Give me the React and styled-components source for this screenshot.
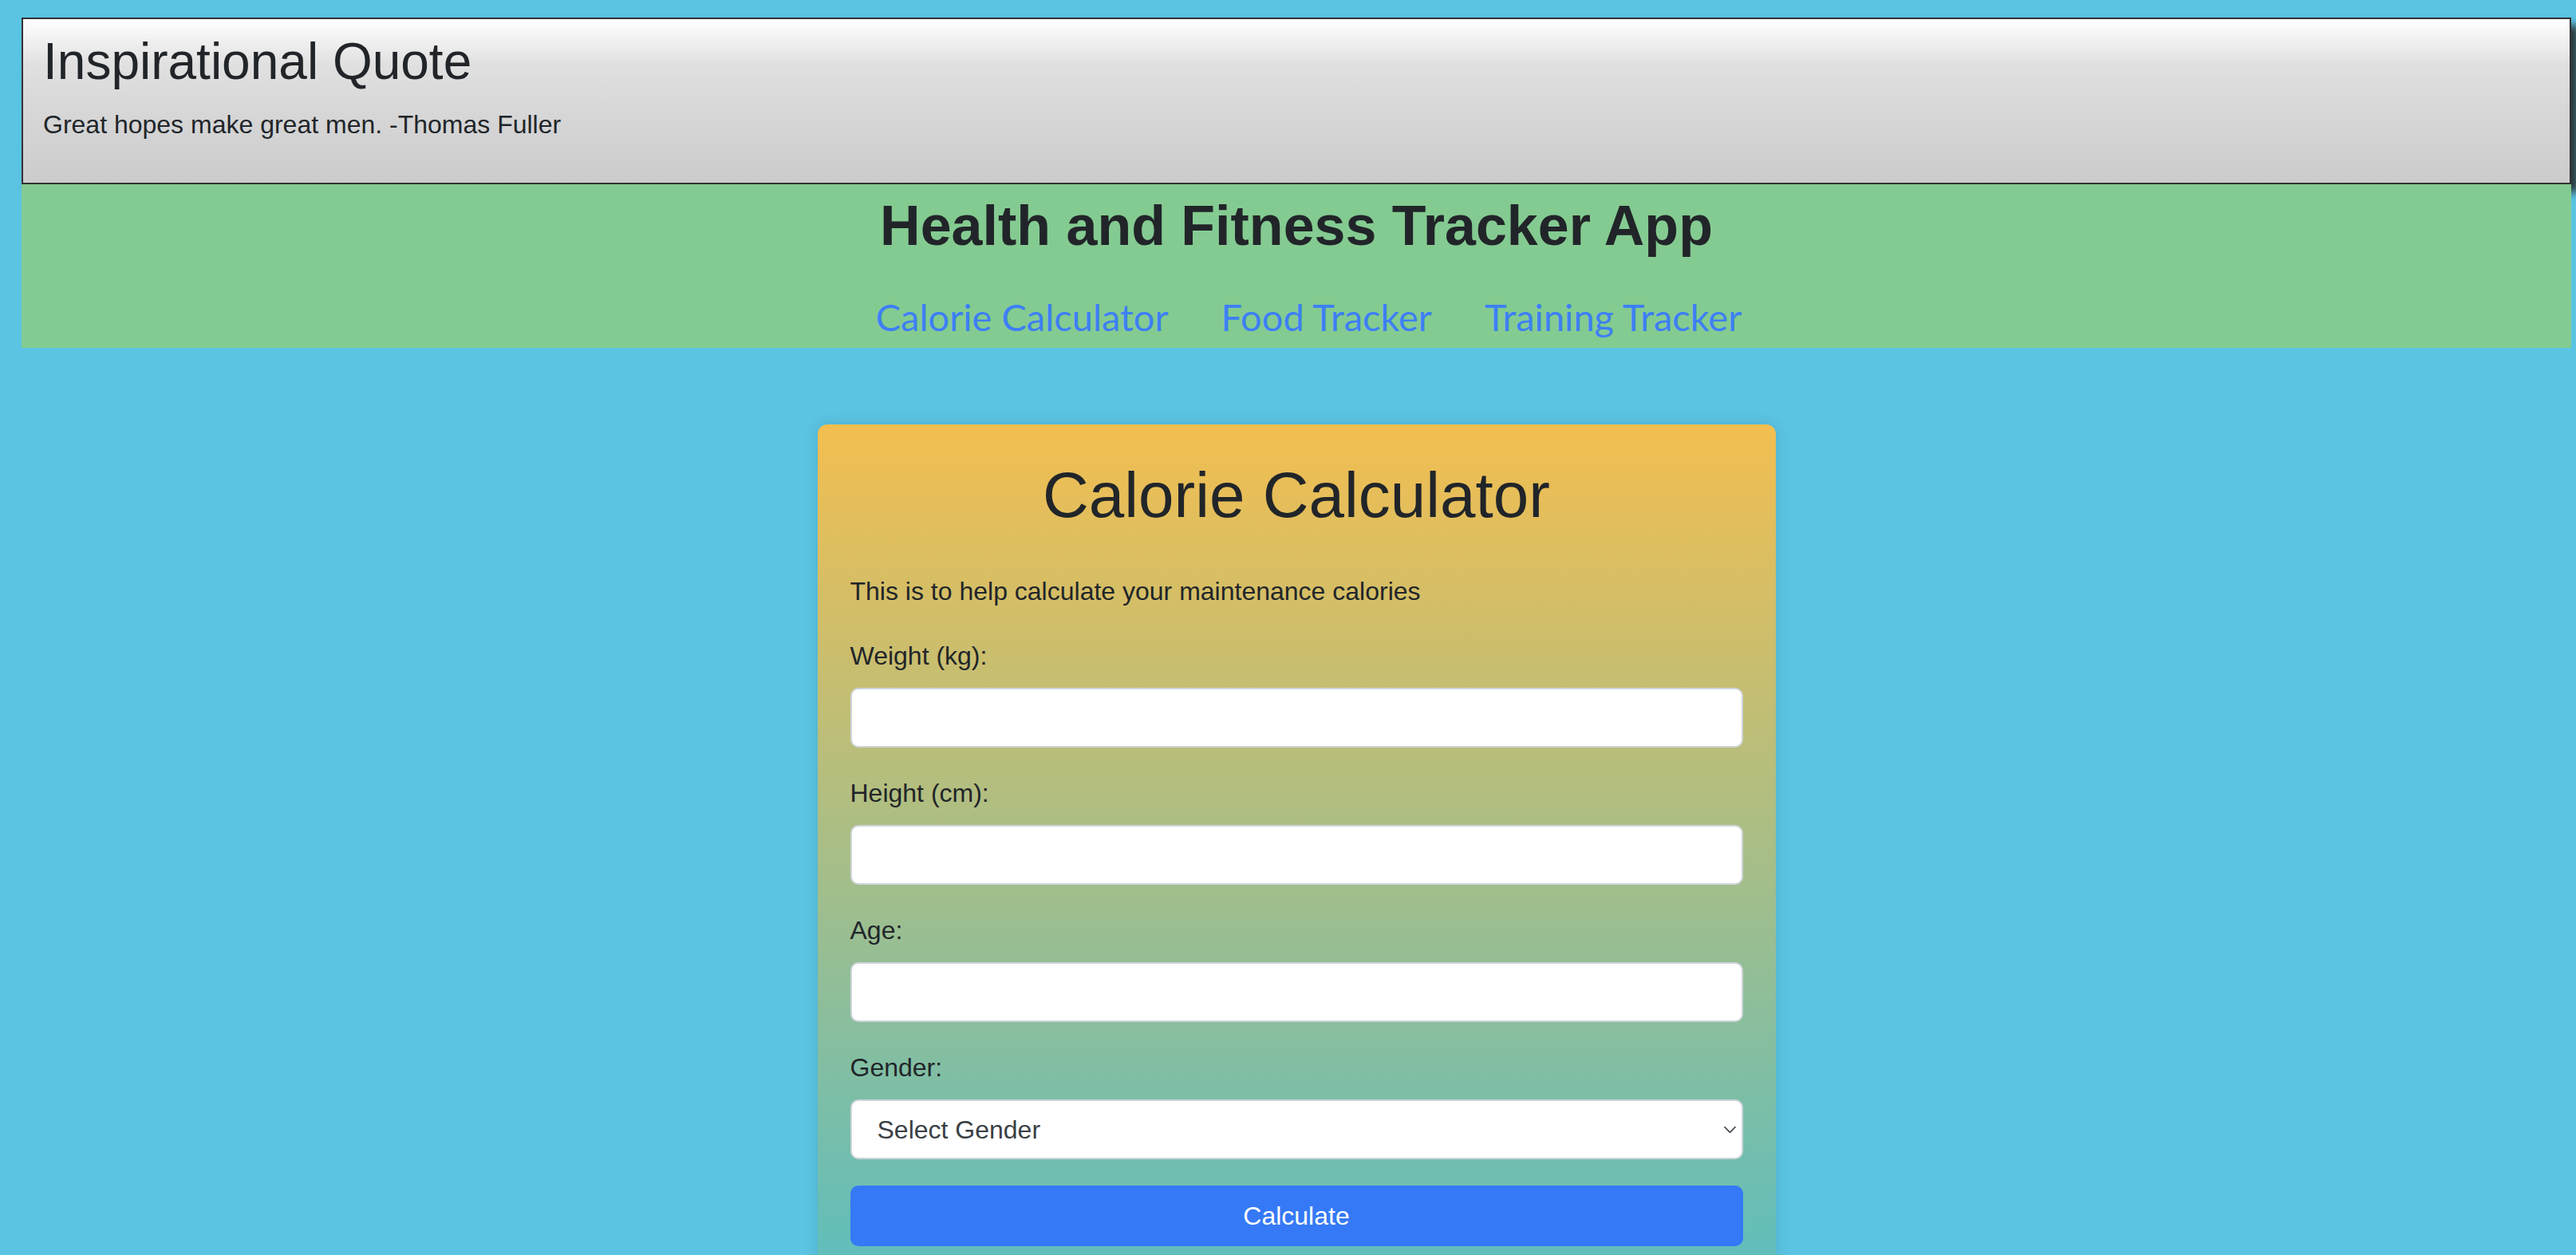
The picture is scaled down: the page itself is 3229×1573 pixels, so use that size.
import React from 'react'
import styled, { createGlobalStyle } from 'styled-components'

const GlobalStyle = createGlobalStyle`
    html, body {
        margin: 0;
        padding: 0;
        overflow: hidden;
        background-color: #5bc4e2;
        font-family: "Liberation Sans", Arial, sans-serif;
        color: #212529;
    }
    * {
        box-sizing: border-box;
    }
`

function App() {
    return (
        <>
            <GlobalStyle />
            <Page>
                <QuoteBox>
                    <QuoteTitle>Inspirational Quote</QuoteTitle>
                    <QuoteText>Great hopes make great men. -Thomas Fuller</QuoteText>
                </QuoteBox>

                <Header>
                    <AppTitle>Health and Fitness Tracker App</AppTitle>
                    <Nav>
                        <NavLink href="#">Calorie Calculator</NavLink>
                        <NavLink href="#">Food Tracker</NavLink>
                        <NavLink href="#">Training Tracker</NavLink>
                    </Nav>
                </Header>

                <Card>
                    <CardTitle>Calorie Calculator</CardTitle>
                    <Intro>This is to help calculate your maintenance calories</Intro>

                    <Field>
                        <Label htmlFor="weight">Weight (kg):</Label>
                        <Input id="weight" type="number" />
                    </Field>
                    <Field>
                        <Label htmlFor="height">Height (cm):</Label>
                        <Input id="height" type="number" />
                    </Field>
                    <Field>
                        <Label htmlFor="age">Age:</Label>
                        <Input id="age" type="number" />
                    </Field>
                    <Field>
                        <Label htmlFor="gender">Gender:</Label>
                        <SelectWrap>
                            <Select id="gender" defaultValue="">
                                <option value="">Select Gender</option>
                                <option value="male">Male</option>
                                <option value="female">Female</option>
                            </Select>
                            <Chevron viewBox="0 0 16 9">
                                <path d="M1 1l7 7 7-7" fill="none" stroke="#454a50" strokeWidth="1.8" strokeLinecap="round" strokeLinejoin="round" />
                            </Chevron>
                        </SelectWrap>
                    </Field>

                    <Button type="button">Calculate</Button>
                </Card>
            </Page>
        </>
    )
}

export default App

const Page = styled.div`
    padding: 22px 6px 0 27px;
    min-height: 1573px;
`

const QuoteBox = styled.div`
    border: 2px solid #333;
    padding: 14px 21px 16px 25px;
    background: linear-gradient(to bottom, #ffffff 0%, #e0e0e0 28%, #d6d6d6 60%, #cccccc 100%);
    box-shadow: 10px 10px 10px rgba(40, 40, 40, 0.9);
`

const QuoteTitle = styled.h2`
    margin: 0 0 16px;
    font-size: 64px;
    line-height: 78px;
    font-weight: 400;
`

const QuoteText = styled.p`
    margin: 0 0 33px;
    font-size: 32px;
    line-height: 48px;
`

const Header = styled.header`
    background-color: #84cb91;
    padding: 11px 0 15px;
    text-align: center;
`

const AppTitle = styled.h1`
    margin: 0;
    font-size: 70px;
    line-height: 83px;
    font-weight: 700;
`

const Nav = styled.nav`
    display: flex;
    justify-content: center;
    gap: 66px;
    margin-top: 49px;
    padding-left: 31px;
`

const NavLink = styled.a`
    font-family: Lato, "Open Sans", sans-serif;
    font-size: 47px;
    line-height: 47px;
    color: #3d7ff5;
    text-decoration: none;
`

const Card = styled.div`
    width: 1201px;
    margin: 96px auto 0;
    padding: 41px 41px 41px;
    border-radius: 12px;
    background: linear-gradient(to bottom, #f3be50, #5dbebe);
    box-shadow: 0 0 18px rgba(0, 0, 0, 0.12);
`

const CardTitle = styled.h2`
    margin: 0 0 48px;
    font-size: 80px;
    line-height: 96px;
    font-weight: 400;
    text-align: center;
`

const Intro = styled.p`
    margin: 0 0 33px;
    font-size: 32px;
    line-height: 48px;
`

const Field = styled.div`
    display: flex;
    flex-direction: column;
    margin-bottom: 33px;
`

const Label = styled.label`
    font-size: 32px;
    line-height: 48px;
    margin-bottom: 16px;
`

const Input = styled.input`
    height: 75px;
    width: 100%;
    border: 2px solid #ced4da;
    border-radius: 10px;
    background: #fff;
    font-family: inherit;
    font-size: 32px;
    padding: 0 24px;
    outline: none;
    -moz-appearance: textfield;
    &::-webkit-inner-spin-button,
    &::-webkit-outer-spin-button {
        -webkit-appearance: none;
        margin: 0;
    }
`

const SelectWrap = styled.div`
    position: relative;
`

const Select = styled.select`
    appearance: none;
    -webkit-appearance: none;
    width: 100%;
    height: 75px;
    border: 2px solid #ced4da;
    border-radius: 10px;
    background: #fff;
    font-family: inherit;
    font-size: 32px;
    color: #3a3f44;
    padding: 0 60px 0 32px;
    outline: none;
`

const Chevron = styled.svg`
    position: absolute;
    right: 9px;
    top: 50%;
    width: 15px;
    height: 9px;
    transform: translateY(-50%);
    pointer-events: none;
`

const Button = styled.button`
    display: block;
    width: 100%;
    height: 76px;
    border: none;
    border-radius: 10px;
    background-color: #3579f6;
    color: #fff;
    font-family: inherit;
    font-size: 32px;
    cursor: pointer;
`
